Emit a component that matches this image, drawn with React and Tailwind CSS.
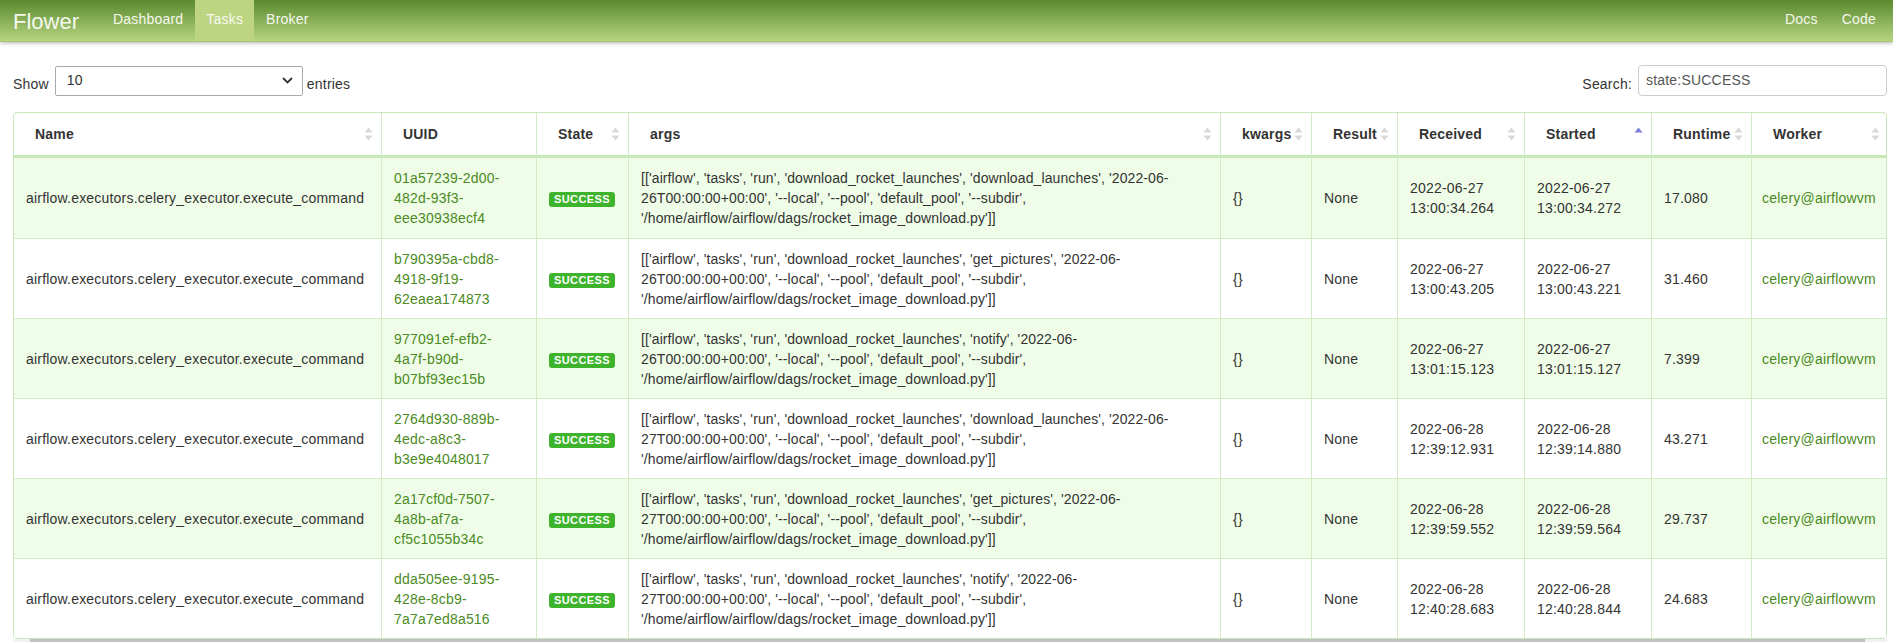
import React from 'react';

const columns = [
  { label: 'Name', w: 'w-[367px]', sort: 'both' },
  { label: 'UUID', w: 'w-[155px]', sort: null },
  { label: 'State', w: 'w-[92px]', sort: 'both' },
  { label: 'args', w: 'w-[592px]', sort: 'both' },
  { label: 'kwargs', w: 'w-[91px]', sort: 'both' },
  { label: 'Result', w: 'w-[86px]', sort: 'both' },
  { label: 'Received', w: 'w-[127px]', sort: 'both' },
  { label: 'Started', w: 'w-[127px]', sort: 'asc' },
  { label: 'Runtime', w: 'w-[100px]', sort: 'both' },
  { label: 'Worker', w: 'w-[137px]', sort: 'both' },
];

const tasks = [
  {
    uuid: ['01a57239-2d00-', '482d-93f3-', 'eee30938ecf4'],
    task: 'download_launches',
    day: '26',
    received: ['2022-06-27', '13:00:34.264'],
    started: ['2022-06-27', '13:00:34.272'],
    runtime: '17.080',
  },
  {
    uuid: ['b790395a-cbd8-', '4918-9f19-', '62eaea174873'],
    task: 'get_pictures',
    day: '26',
    received: ['2022-06-27', '13:00:43.205'],
    started: ['2022-06-27', '13:00:43.221'],
    runtime: '31.460',
  },
  {
    uuid: ['977091ef-efb2-', '4a7f-b90d-', 'b07bf93ec15b'],
    task: 'notify',
    day: '26',
    received: ['2022-06-27', '13:01:15.123'],
    started: ['2022-06-27', '13:01:15.127'],
    runtime: '7.399',
  },
  {
    uuid: ['2764d930-889b-', '4edc-a8c3-', 'b3e9e4048017'],
    task: 'download_launches',
    day: '27',
    received: ['2022-06-28', '12:39:12.931'],
    started: ['2022-06-28', '12:39:14.880'],
    runtime: '43.271',
  },
  {
    uuid: ['2a17cf0d-7507-', '4a8b-af7a-', 'cf5c1055b34c'],
    task: 'get_pictures',
    day: '27',
    received: ['2022-06-28', '12:39:59.552'],
    started: ['2022-06-28', '12:39:59.564'],
    runtime: '29.737',
  },
  {
    uuid: ['dda505ee-9195-', '428e-8cb9-', '7a7a7ed8a516'],
    task: 'notify',
    day: '27',
    received: ['2022-06-28', '12:40:28.683'],
    started: ['2022-06-28', '12:40:28.844'],
    runtime: '24.683',
  },
];

function SortIcon({ mode }) {
  if (!mode) return null;
  return (
    <svg width="9" height="16" viewBox="0 0 9 16" className="shrink-0">
      <path d="M0.5 6.5 L4.5 1.5 L8.5 6.5 Z" fill={mode === 'asc' ? '#7b7fd9' : '#d9d9d9'} />
      {mode !== 'asc' && <path d="M0.5 9.5 L4.5 14.5 L8.5 9.5 Z" fill="#d9d9d9" />}
    </svg>
  );
}

function Lines({ lines }) {
  return lines.map((l, i) => (
    <div key={i} className="whitespace-nowrap">{l}</div>
  ));
}

function App() {
  const td = 'px-3 align-middle border-l border-[#d2ebc6]';

  return (
    <div className="min-h-screen bg-white font-['Liberation_Sans',Arial,sans-serif] text-[14px] tracking-[0.2px] text-[#333]">
      {/* navbar */}
      <div className="relative z-10 flex h-[42px] items-stretch justify-between bg-gradient-to-b from-[#5a8a2e] to-[#b7d580] border-b border-[#a6c274] shadow-[0_1px_4px_rgba(0,0,0,0.3)] pr-[5px]">
        <div className="flex items-stretch">
          <div className="pl-[13px] pr-[22px] pt-[5px] text-[22px] tracking-normal text-[#f4f8ee]">Flower</div>
          <a className="px-3 pt-[9px] text-[#f4f8ee]">Dashboard</a>
          <a className="px-[11px] pt-[9px] bg-[#bdd481] text-[#f7faf2]">Tasks</a>
          <a className="px-3 pt-[9px] text-[#f4f8ee]">Broker</a>
        </div>
        <div className="flex items-stretch">
          <a className="px-3 pt-[9px] text-[#f4f8ee]">Docs</a>
          <a className="px-3 pt-[9px] text-[#f4f8ee]">Code</a>
        </div>
      </div>

      <div className="pl-[13px] pr-[6px]">
        {/* controls */}
        <div className="mt-[23px] mb-[16px] flex items-center justify-between">
          <div className="flex items-center">
            <span className="pt-[8px] pr-[6px]">Show</span>
            <div className="flex h-[30px] w-[248px] items-center justify-between border border-[#a9a9a9] rounded-[2px] bg-white pl-[11px] pr-[9px] text-[#333]">
              <span>10</span>
              <svg width="11" height="7" viewBox="0 0 11 7">
                <path d="M1 1 L5.5 5.5 L10 1" stroke="#333" strokeWidth="1.8" fill="none" />
              </svg>
            </div>
            <span className="pt-[8px] pl-[4px]">entries</span>
          </div>
          <div className="flex items-center">
            <span className="pt-[8px] pr-[6px]">Search:</span>
            <div className="flex h-[31px] w-[249px] items-center border border-[#cccccc] rounded-[4px] bg-white pl-[7px] text-[#555]">
              state:SUCCESS
            </div>
          </div>
        </div>

        {/* table */}
        <div className="rounded-[4px] border border-[#c8e7b9] overflow-hidden">
          <table className="w-full table-fixed border-separate border-spacing-0">
            <colgroup>
              {columns.map((c) => (
                <col key={c.label} className={c.w} />
              ))}
            </colgroup>
            <thead>
              <tr>
                {columns.map((c, i) => (
                  <th
                    key={c.label}
                    className={`p-0 text-left font-bold border-b-[3px] border-b-[#c6eab6] ${i > 0 ? 'border-l border-l-[#d2ebc6]' : ''}`}
                  >
                    <div className="flex h-[42px] items-center justify-between pl-[21px] pr-[8px]">
                      <span className="whitespace-nowrap">{c.label}</span>
                      <SortIcon mode={c.sort} />
                    </div>
                  </th>
                ))}
              </tr>
            </thead>
            <tbody>
              {tasks.map((t, i) => {
                const bg = i % 2 === 0 ? 'bg-[#effde8]' : 'bg-white';
                const border = i > 0 ? 'border-t border-t-[#d2ebc6]' : '';
                const pad = i > 0 ? 'pt-[10px] pb-[9px]' : 'py-[10px]';
                const cell = `${border} ${pad} leading-5`;
                return (
                  <tr key={i} className={bg}>
                    <td className={`${cell} px-3 align-middle whitespace-nowrap`}>
                      airflow.executors.celery_executor.execute_command
                    </td>
                    <td className={`${cell} ${td} text-[#4b8a24]`}>
                      <Lines lines={t.uuid} />
                    </td>
                    <td className={`${cell} ${td}`}>
                      <span className="inline-block rounded-[3px] bg-[#3db42b] px-[5px] text-[11px] font-bold leading-[15px] tracking-[0.4px] text-white">
                        SUCCESS
                      </span>
                    </td>
                    <td className={`${cell} ${td} tracking-[0.1px]`}>
                      <Lines
                        lines={[
                          `[['airflow', 'tasks', 'run', 'download_rocket_launches', '${t.task}', '2022-06-`,
                          `${t.day}T00:00:00+00:00', '--local', '--pool', 'default_pool', '--subdir',`,
                          `'/home/airflow/airflow/dags/rocket_image_download.py']]`,
                        ]}
                      />
                    </td>
                    <td className={`${cell} ${td}`}>{'{}'}</td>
                    <td className={`${cell} ${td}`}>None</td>
                    <td className={`${cell} ${td}`}>
                      <Lines lines={t.received} />
                    </td>
                    <td className={`${cell} ${td}`}>
                      <Lines lines={t.started} />
                    </td>
                    <td className={`${cell} ${td}`}>{t.runtime}</td>
                    <td className={`${cell} ${td} pl-[10px] text-[#4b8a24] whitespace-nowrap`}>celery@airflowvm</td>
                  </tr>
                );
              })}
            </tbody>
          </table>
        </div>

        {/* horizontal scrollbar */}
        <div className="h-[17px] bg-[#f1f1f1] pl-[17px] pr-[22px]">
          <div className="h-[13px] bg-[#c1c1c1]" />
        </div>
      </div>
    </div>
  );
}

export default App;
